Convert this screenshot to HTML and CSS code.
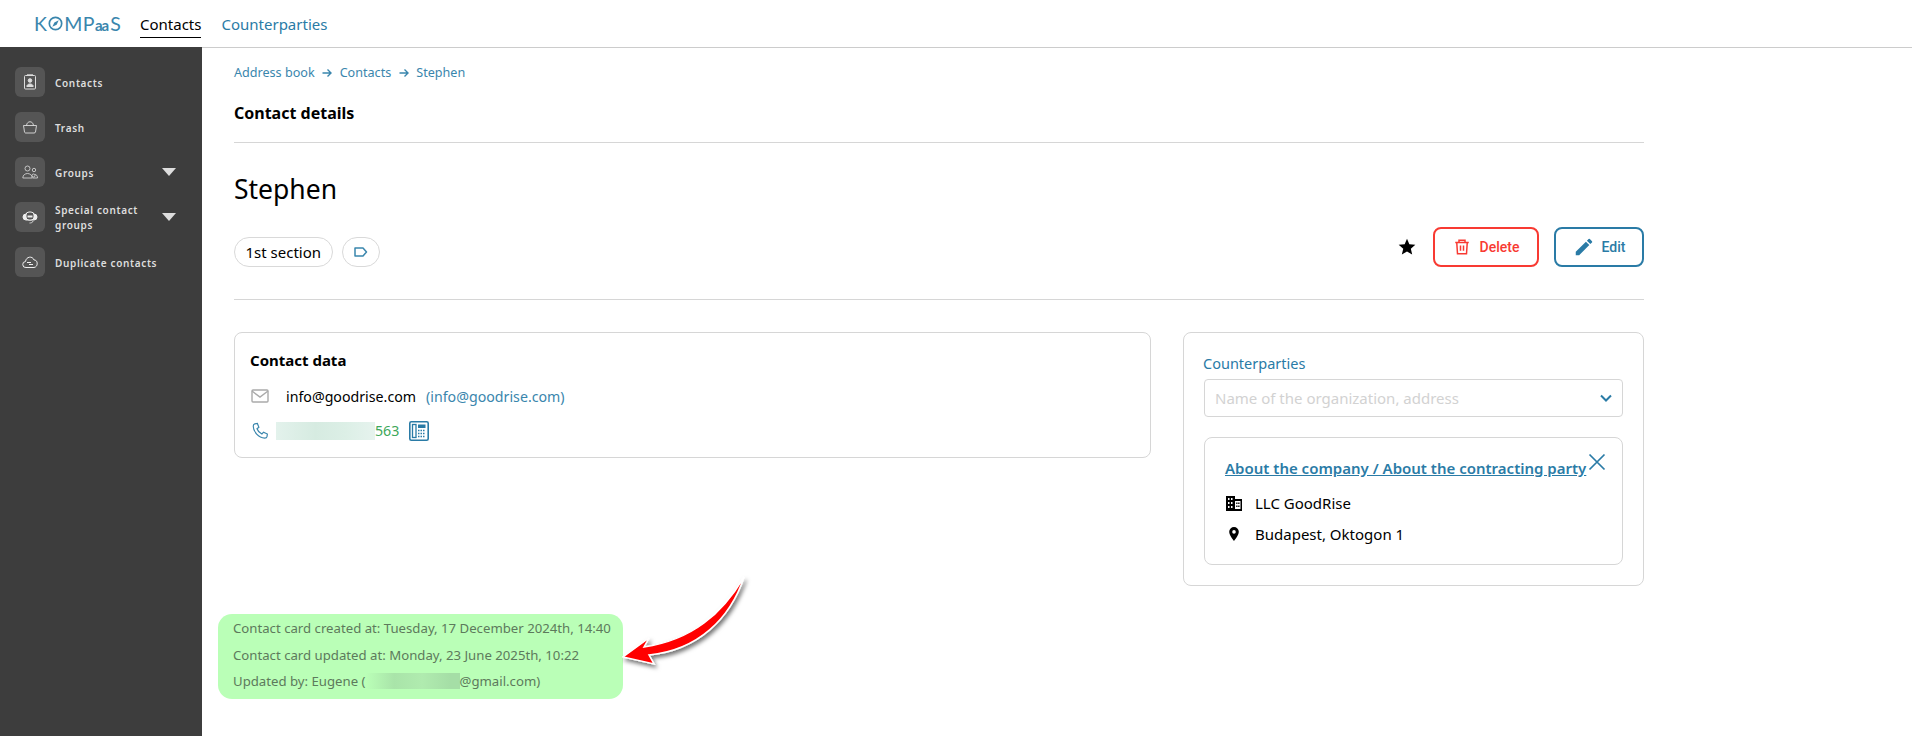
FILE: index.html
```html
<html>
    <head>
        <meta charset="utf-8">
        <title>Contact details</title>
        <link rel="stylesheet" href="styles.css">
    </head>
    <body>
        <header class="top_bar">
            <div class="logo">
                <span>K</span>
                <svg class="logo_o" viewBox="0 0 16 16"><circle cx="8" cy="8" r="6.6" fill="none" stroke="#3a86ad" stroke-width="1.8"/><path d="M11.4 4.6 9.2 9.2 4.6 11.4 6.8 6.8z" fill="#3a86ad"/></svg>
                <span>MP</span><span class="logo_aa">aa</span><span>S</span>
            </div>
            <nav class="top_nav">
                <a class="top_link active">Contacts</a>
                <a class="top_link">Counterparties</a>
            </nav>
        </header>

        <div class="layout">
            <aside class="sidebar">
                <div class="side_item">
                    <span class="side_icon">
                        <svg viewBox="0 0 16 16" fill="none" stroke="#ddd"><rect x="2.5" y="1.5" width="11" height="13.500" rx="1"/><path d="M5 .8h6" /><circle cx="8" cy="6.500" r="1.800" fill="#ddd"/><path d="M4.800 12.500c0-3.400 6.400-3.400 6.400 0z" fill="#ddd"/></svg>
                    </span>
                    <span class="side_text">Contacts</span>
                </div>
                <div class="side_item">
                    <span class="side_icon">
                        <svg viewBox="0 0 16 16" fill="none" stroke="#ddd" stroke-width=".9"><path d="M1.500 6.500h13l-1 6.500a1.500 1.500 0 0 1-1.500 1h-8.500a1.500 1.500 0 0 1-1-1z"/><path d="M4.500 6.500c.5-5 6.500-5 7 0"/></svg>
                    </span>
                    <span class="side_text">Trash</span>
                </div>
                <div class="side_item">
                    <span class="side_icon">
                        <svg viewBox="0 0 16 16" fill="none" stroke="#ddd" stroke-width=".8"><circle cx="5.500" cy="4.500" r="2.500"/><path d="M.8 14c0-6 9.400-6 9.400 0z"/><circle cx="12" cy="6" r="1.700"/><circle cx="11.500" cy="11.500" r="1.500"/><path d="M10.500 14h5c0-2.500-1.500-3.500-2.500-3.500"/></svg>
                    </span>
                    <span class="side_text">Groups</span>
                    <span class="side_arrow"></span>
                </div>
                <div class="side_item">
                    <span class="side_icon">
                        <svg viewBox="0 0 16 16" fill="none" stroke="#eee"><rect x="1" y="5" width="14" height="6" rx="3" fill="#eee"/><rect x="4" y="3" width="8" height="8" rx="3" fill="#555"/><rect x="5.500" y="6.500" width="5" height="2" fill="#eee" stroke="none"/><path d="M11 12c0 1.500-2 2-3.500 2" stroke-width=".8"/></svg>
                    </span>
                    <span class="side_text">Special contact groups</span>
                    <span class="side_arrow"></span>
                </div>
                <div class="side_item">
                    <span class="side_icon">
                        <svg viewBox="0 0 16 16" fill="none" stroke="#eee"><path d="M4 13.500a3 3 0 0 1-.5-6c.5-5 7-6 8.500-1.500 4-.5 4.500 7 0 7.500z"/><path d="M5 8.500h4M7 10.500h4" stroke-width="1.200"/></svg>
                    </span>
                    <span class="side_text">Duplicate contacts</span>
                </div>
            </aside>

            <main class="content">
                <div class="crumbs">
                    <a>Address book</a>
                    <svg class="crumb_arrow" viewBox="0 0 10 10" width="10" height="10" fill="none" stroke="#3a86ad" stroke-width="1.400"><path d="M.5 5h8.500M5.500 1.500 9 5 5.500 8.500"/></svg>
                    <a>Contacts</a>
                    <svg class="crumb_arrow" viewBox="0 0 10 10" width="10" height="10" fill="none" stroke="#3a86ad" stroke-width="1.400"><path d="M.5 5h8.500M5.500 1.500 9 5 5.500 8.500"/></svg>
                    <a>Stephen</a>
                </div>
                <h2 class="page_title">Contact details</h2>

                <h1 class="person">Stephen</h1>

                <div class="person_row">
                    <div class="chips">
                        <span class="chip">1st section</span>
                        <span class="chip chip_tag">
                            <svg viewBox="0 0 14 10" width="14" height="10" fill="none" stroke="#3a86ad" stroke-width="1.500"><path d="M1 1h8l3.500 4L9 9H1z" stroke-linejoin="round"/></svg>
                        </span>
                    </div>
                    <div class="actions">
                        <svg class="star" viewBox="0 0 24 24" width="20" height="20"><path d="M12 17.300 18.200 21l-1.600-7L22 9.200l-7.200-.6L12 2 9.200 8.600 2 9.200 7.500 14l-1.700 7z"/></svg>
                        <a class="btn btn_delete">
                            <svg viewBox="0 0 24 24" width="18" height="18" fill="none" stroke="#f83a32" stroke-width="2"><path d="M3 6h18M8 6V3h8v3M5 6l1 15h12l1-15M10 10v7M14 10v7"/></svg>
                            Delete
                        </a>
                        <a class="btn btn_edit">
                            <svg viewBox="0 0 24 24" width="22" height="22" fill="#2a7ba6"><path d="M3 17.300V21h3.700L17.800 9.900l-3.700-3.700zM20.700 7a1 1 0 0 0 0-1.400l-2.300-2.300a1 1 0 0 0-1.400 0l-1.800 1.800 3.700 3.700z"/></svg>
                            Edit
                        </a>
                    </div>
                </div>

                <div class="cards">
                    <section class="card card_data">
                        <h3 class="card_title">Contact data</h3>
                        <div class="data_row">
                            <svg viewBox="0 0 18 14" width="18" height="14" fill="none" stroke="#aaa" stroke-width="1.400"><rect x="1" y="1" width="16" height="12" rx="1"/><path d="M1 2l8 6 8-6"/></svg>
                            <span class="mail">info@goodrise.com</span>
                            <a class="mail_link">(info@goodrise.com)</a>
                        </div>
                        <div class="data_row phone_row">
                            <svg viewBox="0 0 24 24" width="18" height="18" fill="none" stroke="#3a86ad" stroke-width="1.600"><path d="M5 2.500 8.500 2l2 5-2.500 2c1 3 3.500 5.500 6.500 7l2.300-2.500 5 2.500-.5 3.500c-.3 1.500-1.500 2-3 2C10 21 3 13 3 5.500c0-1.500.7-2.700 2-3z"/></svg>
                            <span class="phone"><span class="blur_bar"></span>563</span>
                            <svg viewBox="0 0 20 20" width="20" height="20"><rect x=".8" y=".8" width="18.400" height="18.400" rx="1.500" fill="#fff" stroke="#2a7ba6" stroke-width="1.600"/><rect x="3.500" y="3.500" width="3.500" height="13" fill="none" stroke="#2a7ba6" stroke-width="1.300"/><rect x="9" y="3.500" width="7.500" height="3.500" fill="#2a7ba6"/><path d="M9 9.500h7.500M9 12.500h7.500M9 15.500h7.500" stroke="#2a7ba6" stroke-width="1.600" stroke-dasharray="1.500 1"/></svg>
                        </div>
                    </section>

                    <section class="card card_side">
                        <label class="field_label">Counterparties</label>
                        <div class="select_box">
                            <span>Name of the organization, address</span>
                            <svg viewBox="0 0 12 8" width="12" height="8" fill="none" stroke="#2a7ba6" stroke-width="2"><path d="M1 1.500l5 5 5-5"/></svg>
                        </div>
                        <div class="company">
                            <div class="company_head">
                                <a class="company_link">About the company / About the contracting party</a>
                                <svg class="company_close" viewBox="0 0 18 18" width="18" height="18" fill="none" stroke="#2a7ba6" stroke-width="1.700"><path d="M1.500 1.500l15 15M16.500 1.500l-15 15"/></svg>
                            </div>
                            <div class="company_row">
                                <svg viewBox="0 0 18 16" width="18" height="16"><path fill-rule="evenodd" d="M1 1h9v3h7v12H1zM3 3v2h1.500V3zm3 0v2h1.500V3zM3 7v2h1.500V7zm3 0v2h1.500V7zm-3 4v2h1.500v-2zm3 0v2h1.500v-2zm4-5v8h5.500V6zm1.200 1.500h1.300v1.500h-1.300zm2 0h1.300v1.500h-1.300zm-2 3h1.300V12h-1.300zm2 0h1.300V12h-1.300z"/></svg>
                                <span>LLC GoodRise</span>
                            </div>
                            <div class="company_row">
                                <svg viewBox="0 0 18 16" width="18" height="16"><path fill-rule="evenodd" d="M9 1a4.800 4.800 0 0 0-4.800 4.800C4.200 9.500 9 15 9 15s4.800-5.500 4.800-9.200A4.800 4.800 0 0 0 9 1zm0 6.700a1.800 1.800 0 1 1 0-3.600 1.800 1.800 0 0 1 0 3.600z"/></svg>
                                <span>Budapest, Oktogon 1</span>
                            </div>
                        </div>
                    </section>
                </div>

                <div class="history">
                    <p>Contact card created at: Tuesday, 17 December 2024th, 14:40</p>
                    <p>Contact card updated at: Monday, 23 June 2025th, 10:22</p>
                    <p>Updated by: Eugene (<span class="hidden_mail"><span class="blur_green"></span></span>@gmail.com)</p>
                </div>

                <!-- annotation arrow drawn over the page -->
                <svg class="note_arrow" viewBox="0 0 130 100" width="130" height="100">
                    <defs>
                        <filter id="drop" x="-20%" y="-20%" width="140%" height="140%"><feDropShadow dx="2" dy="3" stdDeviation="2" flood-color="#000" flood-opacity=".55"/></filter>
                    </defs>
                    <path d="M122 3C100 40 70 66 22 73L27 64 1 83 32 90 27 81C76 76 108 45 122 3z" fill="#f00" stroke="#fff" stroke-width="1.500" filter="url(#drop)"/>
                </svg>
            </main>
        </div>
    </body>
</html>
```

FILE: styles.css
```css
* {
    box-sizing: border-box;
}

html, body {
    margin: 0;
    height: 100%;
}

body {
    font-family: "Noto Sans", "Open Sans", sans-serif;
    font-size: 14px;
    color: #000000;
    background-color: #FFFFFF;
    overflow: hidden;
}

.top_bar {
    display: flex;
    align-items: stretch;
    height: 48px;
    padding-left: 34px;
    border-bottom: 1px solid #cccccc;
}

.logo {
    display: flex;
    align-items: center;
    width: 106px;
    color: #3a86ad;
    font-size: 19.500px;
    letter-spacing: .4px;
    font-family: "Lato", sans-serif;
}

.logo_o {
    width: 15px;
    height: 15px;
    margin: 0 1px;
}

.logo_aa {
    font-size: 15px;
    letter-spacing: -1px;
    font-weight: 700;
    margin-right: 2px;
    margin-top: 3px;
}

.top_nav {
    display: flex;
    gap: 20px;
}

.top_link {
    display: flex;
    align-items: center;
    height: 38px;
    padding-top: 10px;
    font-size: 15px;
    color: #2a7ba6;
}

.top_link.active {
    color: #000000;
    border-bottom: 1.500px solid #000000;
}

.layout {
    display: flex;
    height: 688px;
}

.sidebar {
    width: 202px;
    flex-shrink: 0;
    padding: 20px 15px 0;
    margin-top: -1px;
    background-color: #3d3d3d;
    height: 689px;
    display: flex;
    flex-direction: column;
    gap: 15px;
}

.side_item {
    display: flex;
    align-items: center;
    height: 30px;
}

.side_icon {
    display: flex;
    align-items: center;
    justify-content: center;
    width: 30px;
    height: 30px;
    flex-shrink: 0;
    border-radius: 6px;
    background-color: #555555;
}

.side_icon svg {
    width: 16px;
    height: 16px;
}

.side_text {
    width: 100px;
    margin-left: 10px;
    padding-top: 1.500px;
    font-size: 10px;
    font-weight: 600;
    line-height: 14.500px;
    letter-spacing: .65px;
    color: #dddddd;
}

.side_item:last-child .side_text {
    white-space: nowrap;
}

.side_arrow {
    width: 0;
    height: 0;
    margin-left: 7px;
    margin-top: -1px;
    border-left: 7px solid transparent;
    border-right: 7px solid transparent;
    border-top: 8px solid #dddddd;
}

.content {
    position: relative;
    width: 1442px;
    padding: 15px 0 0 32px;
}

.crumbs {
    display: flex;
    align-items: center;
    height: 19px;
    font-size: 12.600px;
    color: #3a86ad;
}

.crumb_arrow {
    margin: 0 7.500px;
}

.page_title {
    margin: 20px 0 0;
    height: 41px;
    font-size: 16px;
    font-weight: 700;
    line-height: 22px;
    border-bottom: 1px solid #d6d6d6;
}

.person {
    margin: 27px 0 0;
    font-size: 26.500px;
    font-weight: 400;
    line-height: 38px;
}

.person_row {
    display: flex;
    justify-content: space-between;
    align-items: flex-start;
    height: 73px;
    margin-top: 19px;
    margin-bottom: 32px;
    border-bottom: 1px solid #d6d6d6;
}

.chips {
    display: flex;
    gap: 9px;
    align-items: center;
    margin-top: 10px;
}

.chip {
    display: flex;
    align-items: center;
    justify-content: center;
    height: 30px;
    padding: 0 10.500px;
    border: 1px solid #d9d9d9;
    border-radius: 15px;
    font-size: 15px;
}

.chip_tag {
    width: 38px;
    margin-top: -1px;
    padding: 0;
}

.actions {
    display: flex;
    align-items: center;
}

.star {
    margin-right: 16px;
}

.btn {
    display: flex;
    align-items: center;
    justify-content: center;
    height: 40px;
    border-radius: 8px;
    border: 2px solid;
    font-family: "Roboto", sans-serif;
    font-size: 14px;
    font-weight: 500;
}

.btn_delete {
    width: 106px;
    gap: 9px;
    margin-right: 15px;
    color: #f83a32;
    border-color: #f83a32;
}

.btn_edit {
    width: 90px;
    gap: 7px;
    color: #2a7ba6;
    border-color: #2a7ba6;
}

.cards {
    display: flex;
    gap: 32px;
    align-items: flex-start;
}

.card {
    border: 1px solid #d6d6d6;
    border-radius: 8px;
}

.card_data {
    width: 917px;
    height: 126px;
    padding: 17px 16px 0;
}

.card_title {
    margin: 0 0 14px -1px;
    font-size: 15px;
    font-weight: 700;
    line-height: 20px;
}

.data_row {
    display: flex;
    align-items: center;
    height: 24px;
    font-size: 14.200px;
}

.mail {
    margin-left: 17px;
}

.mail_link {
    margin-left: 10px;
    color: #3a86ad;
}

.phone_row {
    margin-top: 12.500px;
    height: 20px;
}

.phone {
    display: flex;
    align-items: center;
    margin-left: 7px;
    margin-right: 10px;
    color: #3ea85a;
}

.blur_bar {
    width: 99px;
    height: 18px;
    background: linear-gradient(90deg, #e3f2ec, #d6ebe1 40%, #dcefe6 70%, #e6f3ee);
}

.card_side {
    width: 461px;
    height: 254px;
    padding: 20px 20px 0;
}

.field_label {
    display: block;
    margin-left: -1px;
    font-size: 14.500px;
    line-height: 20px;
    color: #2a7ba6;
}

.select_box {
    display: flex;
    align-items: center;
    justify-content: space-between;
    height: 38px;
    margin-top: 6px;
    padding: 0 10px;
    border: 1px solid #d6d6d6;
    border-radius: 4px;
    font-size: 15px;
    color: #d2d2d2;
}

.company {
    height: 128px;
    margin-top: 20px;
    padding: 20px 20px 0;
    border: 1px solid #d6d6d6;
    border-radius: 8px;
}

.company_head {
    display: flex;
    align-items: flex-start;
    height: 20px;
    margin-bottom: 9px;
}

.company_link {
    font-size: 15px;
    font-weight: 600;
    line-height: 20px;
    color: #2a7ba6;
    text-decoration: underline;
    white-space: nowrap;
}

.company_close {
    flex-shrink: 0;
    margin-left: 2px;
    margin-top: -5px;
}

.company_row {
    display: flex;
    align-items: center;
    gap: 12px;
    height: 31px;
    font-size: 15px;
}

.history {
    width: 405px;
    height: 85px;
    margin: 28px 0 0 -16px;
    padding: 1px 0 0 15px;
    background-color: #baffb7;
    border-radius: 14px;
    font-size: 13.200px;
    color: #5d7a5c;
}

.history p {
    margin: 0;
    height: 26.500px;
    line-height: 26.500px;
    white-space: nowrap;
}

.hidden_mail {
    display: inline-block;
    width: 94px;
    height: 16px;
    vertical-align: -3px;
}

.blur_green {
    display: block;
    height: 100%;
    background: linear-gradient(90deg, #baffb7, #a9e4a9 30%, #b0ebaf 60%, #a5dea6 90%);
}

.note_arrow {
    position: absolute;
    left: 420px;
    top: 526px;
}
```
